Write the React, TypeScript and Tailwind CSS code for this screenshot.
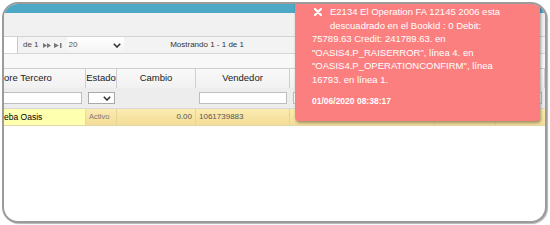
import React from 'react';

const cols = [82, 31, 79, 94, 145, 61, 49];

function Chevron({ className = '' }: { className?: string }) {
  return (
    <svg width="8" height="5" viewBox="0 0 8 5" className={className}>
      <polyline points="0.8,0.8 4,4 7.2,0.8" fill="none" stroke="#333" strokeWidth="1.6" />
    </svg>
  );
}

function PagerIcons() {
  return (
    <div className="flex items-center gap-[3px] ml-[4px]">
      <svg width="8" height="5" viewBox="0 0 8 5">
        <polygon points="0,0 4,2.5 0,5" fill="#777" />
        <polygon points="4,0 8,2.5 4,5" fill="#777" />
      </svg>
      <svg width="8" height="5" viewBox="0 0 8 5">
        <polygon points="0,0 5,2.5 0,5" fill="#777" />
        <rect x="6" y="0" width="1.5" height="5" fill="#777" />
      </svg>
    </div>
  );
}

export default function App() {
  return (
    <div className="w-[550px] h-[225px] bg-white pt-[2px] pl-[2px] font-['Liberation_Sans',Arial,sans-serif]">
      <div className="relative w-[545px] h-[221px] rounded-[16px] border-2 border-[#9b9b9b] overflow-hidden bg-white shadow-[1px_1px_1px_rgba(0,0,0,0.3)]">
        {/* top bar */}
        <div className="h-[9px] bg-[#4da9c6]" />
        <div className="h-[24px] bg-[#f1f1f1] border-b border-[#d2d2d2]" />

        {/* pager */}
        <div className="h-[17px] flex items-stretch bg-[#f3f3f3] border-b border-[#d6d6d6] text-[8px] text-[#444]">
          <div className="w-[14px] bg-white border-r border-[#c9c9c9]" />
          <div className="flex items-center pl-[5px]">
            <span>de 1</span>
            <PagerIcons />
          </div>
          <div className="ml-[5px] w-[57px] flex items-center justify-between bg-gradient-to-b from-white to-[#f3f3f3] pl-[2px] pr-[3px]">
            <span className="text-[#555]">20</span>
            <Chevron />
          </div>
          <div className="w-[167px] flex items-center justify-center text-[#333]">Mostrando 1 - 1 de 1</div>
          <div className="flex-1" />
        </div>

        <div className="h-[15px] bg-[#f8f8f8] border-b border-[#cfcfcf]" />

        {/* header row */}
        <div className="h-[19px] flex bg-gradient-to-b from-[#f9f9f9] to-[#f1f1f1] text-[9.5px] text-[#1a1a1a]">
          {['ore Tercero', 'Estado', 'Cambio', 'Vendedor', '', '', ''].map((t, i) => (
            <div
              key={i}
              style={{ width: cols[i] }}
              className={`flex items-center border-r border-[#cfcfcf] ${i === 0 ? 'pl-[0px]' : 'justify-center'}`}
            >
              {t}
            </div>
          ))}
        </div>

        {/* filter row */}
        <div className="h-[21px] flex bg-[#ededed] border-b border-[#d8d8d8]">
          <div style={{ width: cols[0] }} className="flex items-center pr-[4px]">
            <div className="w-full h-[12px] bg-white border border-[#bdbdbd] border-l-0" />
          </div>
          <div style={{ width: cols[1] }} className="flex items-center pl-[2px] pr-[2px]">
            <div className="w-full h-[12px] bg-white border border-[#a9a9a9] flex items-center justify-end pr-[3px]">
              <Chevron />
            </div>
          </div>
          <div style={{ width: cols[2] }} />
          <div style={{ width: cols[3] }} className="flex items-center px-[3px]">
            <div className="w-full h-[12px] bg-white border border-[#bdbdbd]" />
          </div>
          <div style={{ width: cols[4] }} className="flex items-center px-[3px]">
            <div className="w-full h-[12px] bg-white border border-[#bdbdbd]" />
          </div>
          <div style={{ width: cols[5] }} className="flex items-center px-[3px]">
            <div className="w-full h-[12px] bg-white border border-[#bdbdbd]" />
          </div>
          <div style={{ width: cols[6] }} className="flex items-center px-[3px]">
            <div className="w-full h-[12px] bg-white border border-[#bdbdbd]" />
          </div>
        </div>

        {/* data row */}
        <div className="h-[17px] flex bg-gradient-to-b from-[#fbecb0] to-[#f4dd98] border-b border-[#e3d6a8] text-[8px]">
          <div style={{ width: cols[0] }} className="flex items-center bg-[#ffffb0] text-[8.5px] text-black border-r border-[#e6dca0]">
            eba Oasis
          </div>
          <div style={{ width: cols[1] }} className="flex items-center pl-[3px] text-[7.5px] text-[#777] border-r border-[#e6d49a]">
            Activo
          </div>
          <div style={{ width: cols[2] }} className="flex items-center justify-end pr-[3px] text-[#555] border-r border-[#e6d49a]">
            0.00
          </div>
          <div style={{ width: cols[3] }} className="flex items-center pl-[3px] text-[#555] border-r border-[#e6d49a]">
            1061739883
          </div>
          <div style={{ width: cols[4] }} className="border-r border-[#e6d49a]" />
          <div style={{ width: cols[5] }} className="border-r border-[#e6d49a]" />
          <div style={{ width: cols[6] }} />
        </div>

        {/* error toast */}
        <div className="absolute left-[291px] top-[-6px] w-[245px] h-[123px] bg-[#fc7f80] rounded-[4px] shadow-[1px_2px_3px_rgba(0,0,0,0.35)] pt-[7px] pl-[17px] text-white text-[9.5px] leading-[13.6px] whitespace-nowrap">
          <div className="relative pl-[18px]">
            <svg width="8" height="8" viewBox="0 0 8 8" className="absolute left-[2px] top-[3px]">
              <path d="M1 1 L7 7 M7 1 L1 7" stroke="white" strokeWidth="2.2" strokeLinecap="round" />
            </svg>
            E2134 El Operation FA 12145 2006 esta
          </div>
          <div className="pl-[18px]">descuadrado en el BookId : 0 Debit:</div>
          <div>75789.63 Credit: 241789.63. en</div>
          <div>"OASIS4.P_RAISERROR", línea 4. en</div>
          <div>"OASIS4.P_OPERATIONCONFIRM", línea</div>
          <div>16793. en línea 1.</div>
          <div className="mt-[9px] text-[8.5px] leading-[10px] font-bold">01/06/2020 08:38:17</div>
        </div>
      </div>
    </div>
  );
}
